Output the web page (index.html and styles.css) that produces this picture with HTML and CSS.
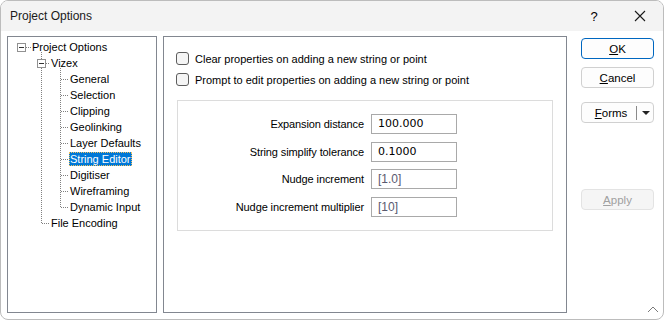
FILE: index.html
```html
<!DOCTYPE html>
<html lang="en">
<head>
    <meta charset="UTF-8">
    <title>Project Options</title>
    <link rel="stylesheet" href="styles.css">
</head>
<body>

<div class="window">
    <div class="titlebar">
        <span class="title">Project Options</span>
        <span class="help">?</span>
        <svg class="close" width="12" height="12">
            <path d="M1 1 L11 11 M11 1 L1 11" stroke="#1a1a1a" stroke-width="1.1"/>
        </svg>
    </div>

    <div class="main">
        <div class="tree">
            <svg class="tree-lines" width="148" height="275">
                <g stroke="#808080" stroke-dasharray="1 1" fill="none">
                    <line x1="18" y1="10.5" x2="23" y2="10.5"/>
                    <line x1="33.5" y1="15" x2="33.5" y2="187"/>
                    <line x1="38" y1="26.5" x2="42" y2="26.5"/>
                    <line x1="34" y1="186.5" x2="42" y2="186.5"/>
                    <line x1="52.5" y1="31" x2="52.5" y2="171"/>
                    <line x1="53" y1="42.5" x2="61" y2="42.5"/>
                    <line x1="53" y1="58.5" x2="61" y2="58.5"/>
                    <line x1="53" y1="74.5" x2="61" y2="74.5"/>
                    <line x1="53" y1="90.5" x2="61" y2="90.5"/>
                    <line x1="53" y1="106.5" x2="61" y2="106.5"/>
                    <line x1="53" y1="122.5" x2="61" y2="122.5"/>
                    <line x1="53" y1="138.5" x2="61" y2="138.5"/>
                    <line x1="53" y1="154.5" x2="61" y2="154.5"/>
                    <line x1="53" y1="170.5" x2="61" y2="170.5"/>
                </g>
                <g stroke="#919191" fill="#fff">
                    <rect x="9.5" y="6.5" width="8" height="8"/>
                    <rect x="29.5" y="22.5" width="8" height="8"/>
                </g>
                <g stroke="#333">
                    <line x1="11" y1="10.5" x2="16" y2="10.5"/>
                    <line x1="31" y1="26.5" x2="36" y2="26.5"/>
                </g>
            </svg>
            <div class="node lvl0">Project Options</div>
            <div class="node lvl1">Vizex</div>
            <div class="node lvl2">General</div>
            <div class="node lvl2">Selection</div>
            <div class="node lvl2">Clipping</div>
            <div class="node lvl2">Geolinking</div>
            <div class="node lvl2">Layer Defaults</div>
            <div class="node lvl2"><span class="selected">String Editor</span></div>
            <div class="node lvl2">Digitiser</div>
            <div class="node lvl2">Wireframing</div>
            <div class="node lvl2">Dynamic Input</div>
            <div class="node lvl1">File Encoding</div>
        </div>

        <div class="content">
            <label class="check"><span class="box"></span>Clear properties on adding a new string or point</label>
            <label class="check"><span class="box"></span>Prompt to edit properties on adding a new string or point</label>

            <div class="group">
                <div class="field-label">Expansion distance</div>
                <div class="input">100.000</div>
                <div class="field-label">String simplify tolerance</div>
                <div class="input">0.1000</div>
                <div class="field-label">Nudge increment</div>
                <div class="input dim">[1.0]</div>
                <div class="field-label">Nudge increment multiplier</div>
                <div class="input dim">[10]</div>
            </div>
        </div>

        <div class="buttons">
            <button class="btn default"><u>O</u>K</button>
            <button class="btn cancel"><u>C</u>ancel</button>
            <button class="btn forms">
                <span class="forms-label"><u>F</u>orms</span>
                <span class="sep"></span>
                <span class="arrow"></span>
            </button>
            <button class="btn apply"><u>A</u>pply</button>
        </div>
    </div>

    <svg class="grip" width="12" height="8">
        <polyline points="1,7 6,2 11,7" stroke="#7a7a7a" fill="none"/>
    </svg>
</div>

</body>
</html>
```

FILE: styles.css
```css
body {
    margin: 0;
    font-family: "Liberation Sans", Arial, sans-serif;
    font-size: 11px;
    color: #000;
    background: #fff;
}
.window {
    position: relative;
    width: 664px;
    height: 320px;
    box-sizing: border-box;
    border: 1px solid #bcbcbc;
    border-radius: 8px;
    overflow: hidden;
    background: #fff;
}
.titlebar {
    height: 30px;
    background: #f3f3f3;
    display: flex;
    align-items: center;
    padding-left: 9px;
}
.title {
    flex: 1;
    font-size: 12px;
    color: #1a1a1a;
}
.help {
    width: 20px;
    text-align: center;
    font-size: 13px;
    margin-right: 30px;
}
.close {
    margin-right: 17px;
}
.main {
    display: flex;
    padding: 5px 0 0 6px;
}
.tree {
    position: relative;
    width: 150px;
    height: 277px;
    box-sizing: border-box;
    border: 1px solid #828790;
    padding-top: 2px;
}
.tree-lines {
    position: absolute;
    left: 0;
    top: 0;
}
.node {
    position: relative;
    height: 16px;
    line-height: 16px;
    white-space: nowrap;
}
.lvl0 { padding-left: 24px; }
.lvl1 { padding-left: 43px; }
.lvl2 { padding-left: 62px; }
.selected {
    background: #0078d7;
    color: #fff;
    margin-left: -1px;
    padding: 1px;
    outline: 1px dotted #f0c060;
    outline-offset: -1px;
}
.content {
    width: 404px;
    height: 277px;
    box-sizing: border-box;
    border: 1px solid #828790;
    margin-left: 6px;
    padding: 11px 0 0 12px;
}
.check {
    display: flex;
    align-items: center;
    height: 21px;
    gap: 6px;
}
.box {
    width: 13px;
    height: 13px;
    box-sizing: border-box;
    border: 1px solid #5d5d5d;
    border-radius: 3px;
    background: #f5f5f5;
}
.group {
    margin: 10px 0 0 1px;
    width: 376px;
    height: 131px;
    box-sizing: border-box;
    border: 1px solid #dcdcdc;
    padding-top: 13px;
    display: grid;
    grid-template-columns: 186px 86px;
    grid-auto-rows: 20px;
    column-gap: 7px;
    row-gap: 7.7px;
    align-content: start;
}
.field-label {
    text-align: right;
    line-height: 20px;
    letter-spacing: -0.1px;
}
.input {
    box-sizing: border-box;
    border: 1px solid #a9a9a9;
    padding-left: 6px;
    line-height: 18px;
    font-family: "DejaVu Sans", sans-serif;
    font-size: 11px;
}
.input.dim {
    color: #5a5a70;
    font-family: "Liberation Sans", Arial, sans-serif;
    font-size: 12px;
}
.buttons {
    display: flex;
    flex-direction: column;
    width: 73px;
    margin-left: 14px;
    padding-top: 2px;
}
.btn {
    height: 21px;
    box-sizing: border-box;
    border: 1px solid #d0d0d0;
    border-radius: 4px;
    background: #fdfdfd;
    font-family: "Liberation Sans", Arial, sans-serif;
    font-size: 11.5px;
    color: #000;
    padding: 0;
}
.default {
    border-color: #0067c0;
}
.cancel {
    margin-top: 8px;
}
.forms {
    margin-top: 14px;
    display: flex;
    align-items: center;
}
.forms-label {
    width: 54px;
    text-align: center;
    padding-left: 4px;
    box-sizing: border-box;
}
.sep {
    width: 1px;
    height: 14px;
    background: #8a8a8a;
}
.arrow {
    margin-left: 5px;
    width: 0;
    height: 0;
    border-left: 4px solid transparent;
    border-right: 4px solid transparent;
    border-top: 4px solid #222;
}
.apply {
    margin-top: 66px;
    background: #f5f5f5;
    border-color: #e3e3e3;
    color: #a0a0a0;
}
.grip {
    position: absolute;
    right: 4px;
    bottom: 6px;
}
```
